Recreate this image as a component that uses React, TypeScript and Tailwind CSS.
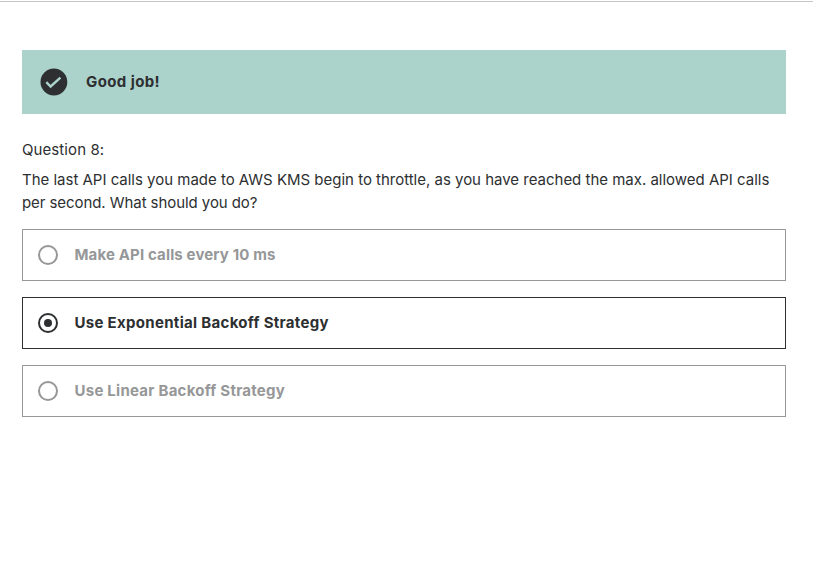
const options = [
  { text: "Make API calls every 10 ms", selected: false, tracking: "tracking-[0.14px]" },
  { text: "Use Exponential Backoff Strategy", selected: true, tracking: "tracking-[0.31px]" },
  { text: "Use Linear Backoff Strategy", selected: false, tracking: "tracking-[0.25px]" },
];

export default function App() {
  return (
    <main className="h-[583px] bg-white pt-px font-['Inter',sans-serif] text-[15px] leading-[23px] text-[#2d2f31]">
      <div className="h-px bg-[#c4c6c8]" />
      <div className="ml-[22px] mt-12 w-[764px]">
        <div className="flex h-16 items-center bg-[#acd2cc] pl-[18px]">
          <svg width="28" height="28" viewBox="0 0 28 28">
            <circle cx="13.9" cy="14" r="13.4" fill="#2d2f31" />
            <path d="m6.3 14.2 4.3 4.3 9.8-8.9" fill="none" stroke="#acd2cc" strokeWidth="2.4" />
          </svg>
          <p className="ml-[18px] pb-0.5 font-bold tracking-[0.4px] whitespace-nowrap">Good job!</p>
        </div>
        <p className="mt-6 tracking-[0.09px]">Question 8:</p>
        <p className="mt-[7px] whitespace-nowrap">
          <span className="tracking-[-0.012px]">The last API calls you made to AWS KMS begin to throttle, as you have reached the max. allowed API calls</span>
          <br />
          <span className="tracking-[-0.07px]">per second. What should you do?</span>
        </p>
        <ul className="mt-[15px] flex flex-col gap-4">
          {options.map((o) => (
            <li key={o.text} className={o.selected ? "flex h-[52px] items-center border border-[#2d2f31] pl-[15px]" : "flex h-[52px] items-center border border-[#969798] pl-[15px] text-[#969798]"}>
              <svg width="20" height="20" viewBox="0 0 20 20" fill="none" stroke="currentColor" strokeWidth="2">
                <circle cx="10" cy="10" r="9" />
                {o.selected && <circle cx="10" cy="10" r="4" fill="currentColor" stroke="none" />}
              </svg>
              <span className={`ml-[16.5px] pb-0.5 font-bold ${o.tracking}`}>{o.text}</span>
            </li>
          ))}
        </ul>
      </div>
    </main>
  );
}
